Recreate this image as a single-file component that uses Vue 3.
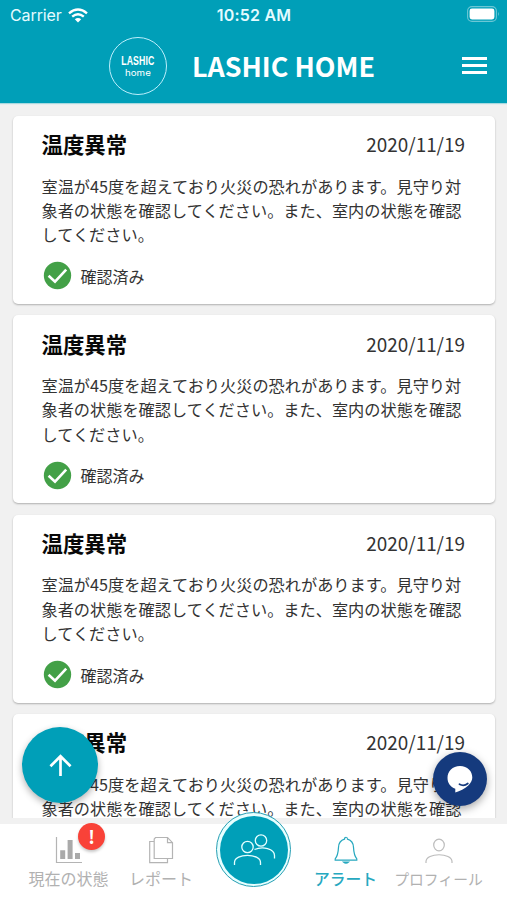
<script setup>
const alerts = [1, 2, 3, 4].map((id) => ({
  id,
  title: '温度異常',
  date: '2020/11/19',
  lines: ['室温が45度を超えており火災の恐れがあります。見守り対', '象者の状態を確認してください。また、室内の状態を確認', 'してください。'],
  status: '確認済み',
}))
</script>

<template>
  <div class="app">
    <header class="header">
      <div class="status">
        <div class="carrier">
          <span>Carrier</span>
          <svg class="wifi" viewBox="0 0 20 15">
            <path d="M1 5.3Q10-2.3 19 5.3" />
            <path d="M4.2 8.6Q10 3.8 15.8 8.6" />
            <path class="dot" d="M6.8 11.2Q10 8.9 13.2 11.2L10 14.6Z" />
          </svg>
        </div>
        <span class="clock">10:52 AM</span>
        <svg class="battery" viewBox="0 0 33 16">
          <rect class="shell" x=".6" y=".6" width="28.8" height="14.8" rx="4.4" />
          <rect class="charge" x="2.6" y="2.6" width="24.8" height="10.8" rx="2.4" />
          <path class="tip" d="M31 5.8Q32.7 8 31 10.2Z" />
        </svg>
      </div>
      <div class="bar">
        <div class="logo">
          <span class="logo-top">LASHIC</span>
          <span class="logo-sub">home</span>
        </div>
        <h1>LASHIC HOME</h1>
        <div class="menu"><i></i><i></i><i></i></div>
      </div>
    </header>

    <main class="list">
      <article v-for="a in alerts" :key="a.id" class="card">
        <div class="head">
          <h2>{{ a.title }}</h2>
          <time>{{ a.date }}</time>
        </div>
        <p><span v-for="l in a.lines" :key="l">{{ l }}</span></p>
        <div class="confirmed">
          <svg viewBox="0 0 28 28">
            <circle cx="14" cy="14" r="13.2" fill="#43a047" />
            <path d="M5.4 14.2l6.2 5.8L22.4 8.4" fill="none" stroke="#fff" stroke-width="2.5" />
          </svg>
          <span>{{ a.status }}</span>
        </div>
      </article>
    </main>

    <nav class="nav">
      <div class="tab chart">
        <svg viewBox="0 0 28 28" fill="none" stroke="#b4b4b4">
          <path d="M1.5 1v25.5H27" stroke-width="1.2" />
          <path d="M5.2 14.2h5v8.8h-5zM12.6 4h5v19h-5zM20 17h5v6h-5z" fill="#aaa" stroke="none" />
        </svg>
        <span>現在の状態</span>
        <b class="badge">!</b>
      </div>
      <div class="tab report">
        <svg viewBox="0 0 28 28" fill="none" stroke="#b4b4b4" stroke-width="1.2">
          <path d="M8.5 1.5h12l5 5.2v15.8H7.2V3z" />
          <path d="M20.5 1.5v5.2h5M7 5.5H2.7v21.2h17.8v-4" />
        </svg>
        <span>レポート</span>
      </div>
      <div class="tab bell">
        <svg viewBox="0 0 28 28" fill="none" stroke="#26a8bf" stroke-width="1.2">
          <path d="M12.5 3.2c0-2.6 3-2.6 3 0 4.3 1.2 5.8 4 6 8.2.3 6 1 8.8 3.3 11.4v1.4H3.2v-1.4c2.3-2.6 3-5.4 3.3-11.4.2-4.2 1.7-7 6-8.2z" />
          <path d="M11.5 26q2.5 2.2 5 0z" fill="#26a8bf" />
        </svg>
        <span>アラート</span>
      </div>
      <div class="tab profile">
        <svg viewBox="0 0 28 28" fill="none" stroke="#bcbcbc" stroke-width="1.2">
          <ellipse cx="14" cy="9" rx="5.3" ry="5.8" />
          <path d="M1 27v-1.5c0-9 26-9 26 0V27" />
        </svg>
        <span>プロフィール</span>
      </div>
    </nav>

    <div class="family">
      <svg viewBox="0 0 68 68" fill="none" stroke="#e5ffff" stroke-width="1.3">
        <circle cx="27.5" cy="31" r="5.7" />
        <path d="M14.5 49v-2.5c0-9.5 26-9.5 26 0V49" />
        <circle cx="41" cy="24.5" r="5.7" />
        <path d="M34.5 33.5c8-3.5 20-1 20 6v3" />
      </svg>
    </div>

    <div class="to-top">
      <svg viewBox="0 0 24 24" fill="none" stroke="#fff" stroke-width="2.8">
        <path d="M12 23V2.5M1.5 12.8L12 2.3l10.500 10.5" />
      </svg>
    </div>
    <div class="chat">
      <svg viewBox="0 0 28 28">
        <path d="M14 1C6.5 1 1.5 6.2 1.5 12.8c0 5.2 2.8 9.2 7.8 11v3.6c4.5-1.2 9.5-3.4 13-6.8 2.6-2.5 4-5.2 4-8C26.3 6.2 21.5 1 14 1z" fill="#fff" />
        <path d="M13.5 19.3q4.3 2.4 8.3-.8" fill="none" stroke="#153a7d" stroke-width="1.8" stroke-linecap="round" />
      </svg>
    </div>
  </div>
</template>

<style>
body { margin: 0; }
</style>

<style scoped>
* { box-sizing: border-box; }
.app {
  position: relative;
  display: flex;
  flex-direction: column;
  width: 507px;
  height: 900px;
  overflow: hidden;
  background: #f1f1f1;
  font-family: "Noto Sans CJK JP", sans-serif;
}
svg { display: block; }
.header {
  flex: none;
  height: 103px;
  background: #009fb8;
  color: #fff;
  box-shadow: 0 1px 1px #a9d9df;
}
.status {
  display: grid;
  grid-template-columns: 1fr auto 1fr;
  align-items: center;
  height: 30px;
  padding: 0 7px 0 10px;
  font-family: Inter, sans-serif;
  font-size: 16px;
  line-height: 30px;
  color: #e4fbff;
}
.carrier { display: flex; align-items: center; gap: 6px; letter-spacing: -.1px; }
.wifi { width: 20px; height: 15px; fill: none; stroke: #fff; stroke-width: 2.4; }
.wifi .dot { fill: #fff; stroke: none; }
.clock { font-weight: 600; font-size: 16px; letter-spacing: .2px; margin-left: -2px; }
.battery { width: 33px; height: 16px; justify-self: end; margin-top: -2px; }
.shell { fill: none; stroke: #6cc7d5; stroke-width: 1.1; }
.charge { fill: #fff; }
.tip { fill: #6cc7d5; }
.bar { display: flex; align-items: center; height: 71px; padding: 0 20px 0 109px; }
.logo {
  display: flex;
  flex-direction: column;
  align-items: center;
  justify-content: center;
  width: 58px;
  height: 58px;
  padding-top: 1px;
  border: 1.5px solid #bdeffc;
  border-radius: 50%;
}
.logo-top {
  font: 700 12.5px/12px "Liberation Sans", sans-serif;
  transform: scaleX(.7);
  letter-spacing: .2px;
}
.logo-sub { font: 400 9px/9px Inter, sans-serif; margin-top: 1px; transform: scaleX(1.08); }
h1 { margin: 0 0 0 25px; font-size: 26.9px; line-height: 40px; font-weight: 700; white-space: nowrap; }
.menu { display: flex; flex-direction: column; gap: 4px; width: 25px; margin-left: auto; }
.menu i { height: 2.7px; background: #fff; }
.list {
  display: flex;
  flex-direction: column;
  gap: 11.45px;
  height: 715px;
  padding: 12.7px 12px 0 13px;
  overflow: hidden;
}
.card {
  flex: none;
  height: 188px;
  padding: 11.4px 30px 0 28.5px;
  background: #fff;
  border-radius: 5px;
  box-shadow: 0 1px 2px rgba(0, 0, 0, .28);
  color: #333;
}
.head { display: flex; justify-content: space-between; align-items: center; height: 34px; }
h2 { margin: 0; font-size: 21.4px; line-height: 34px; font-weight: 700; color: #080808; }
time { font-size: 18.9px; line-height: 34px; }
p { margin: 12.5px 0 0; font-size: 16.2px; line-height: 24.3px; white-space: nowrap; }
p span { display: block; }
.confirmed { display: flex; align-items: center; gap: 9px; margin-top: 14.9px; margin-left: 1px; font-size: 16px; line-height: 28px; }
.confirmed svg { width: 29px; height: 29px; }
.nav {
  display: grid;
  grid-template-columns: 93px 92px 92px 93px;
  justify-content: start;
  height: 76px;
  margin-top: 6px;
  padding-left: 22px;
  background: #fff;
  color: #b1b1b1;
}
.tab { position: relative; display: flex; flex-direction: column; align-items: center; padding-top: 12px; }
.tab svg { width: 28px; height: 28px; }
.tab span { margin-top: 1px; font-size: 16px; line-height: 26px; white-space: nowrap; }
.bell { grid-column: 4; color: #26a8bf; }
.tab.bell span { margin-top: 2px; font-size: 15.8px; font-weight: 500; }
.profile { grid-column: 5; width: 93px; }
.tab.profile span { margin-top: 2px; font-size: 14.8px; }
.badge {
  position: absolute;
  left: 56px;
  top: -1px;
  width: 27px;
  height: 27px;
  border-radius: 50%;
  background: #f94238;
  color: #fff;
  font-size: 18px;
  line-height: 26px;
  text-align: center;
  box-shadow: 0 2px 3px rgba(0, 0, 0, .22);
}
.family {
  position: absolute;
  left: 216px;
  top: 812px;
  width: 75px;
  height: 75px;
  border-radius: 50%;
  border: 1.5px solid #289fb4;
  background: #e7ffff;
  padding: 2.5px;
}
.family svg { width: 100%; height: 100%; border-radius: 50%; background: #009fb8; }
.to-top, .chat { position: absolute; display: flex; align-items: center; justify-content: center; border-radius: 50%; }
.to-top { left: 22px; top: 727px; width: 76px; height: 76px; background: #009fb8; box-shadow: 0 3px 7px rgba(0, 0, 0, .3); }
.to-top svg { width: 23px; height: 23px; }
.chat { left: 433px; top: 752px; width: 54px; height: 54px; background: #153a7d; box-shadow: 0 3px 9px rgba(0, 0, 0, .35); }
.chat svg { width: 28px; height: 28px; }
</style>
